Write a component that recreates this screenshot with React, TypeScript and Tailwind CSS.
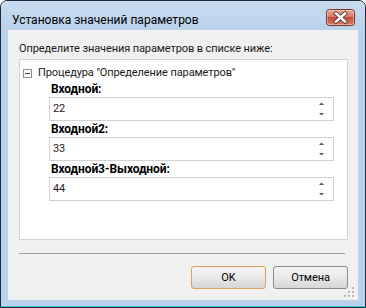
import React from 'react';

function CloseButton() {
  return (
    <svg width="29" height="17" viewBox="0 0 29 17">
      <defs>
        <linearGradient id="closeGrad" x1="0" y1="0" x2="0" y2="1">
          <stop offset="0" stopColor="#eaaa9b" />
          <stop offset="0.45" stopColor="#d67866" />
          <stop offset="0.5" stopColor="#c64a36" />
          <stop offset="1" stopColor="#d9806a" />
        </linearGradient>
      </defs>
      <rect x="0.5" y="0.5" width="28" height="16" rx="3" fill="url(#closeGrad)" stroke="#763529" />
      <rect x="1.5" y="1.5" width="26" height="14" rx="2" fill="none" stroke="#ffffff" strokeOpacity="0.4" />
      <g strokeLinecap="square">
        <path d="M10 4.5 L19 12.5 M19 4.5 L10 12.5" stroke="#5e3a34" strokeWidth="4.2" />
        <path d="M10 4.5 L19 12.5 M19 4.5 L10 12.5" stroke="#ffffff" strokeWidth="2.4" />
      </g>
    </svg>
  );
}

function Spinner() {
  return (
    <svg width="7" height="16" viewBox="0 0 7 16" className="mr-[8px]">
      <path d="M1 4 L6 4 L3.5 1.5 Z" fill="#5a5a5a" />
      <path d="M1 12 L6 12 L3.5 14.5 Z" fill="#5a5a5a" />
    </svg>
  );
}

function Param({ label, value }: { label: string; value: string }) {
  return (
    <div className="flex flex-col">
      <div className="h-[16px] leading-[16px] pl-[2px] text-[12px] font-bold text-black">{label}</div>
      <div className="h-[24px] w-[285px] border border-[#d1d1d1] bg-white flex items-center justify-between pl-[3px]">
        <span className="text-[#1e1e1e]">{value}</span>
        <Spinner />
      </div>
    </div>
  );
}

function Grip() {
  const dots = [
    [8, 0],
    [4, 4],
    [8, 4],
    [0, 8],
    [4, 8],
    [8, 8],
  ];
  return (
    <svg width="11" height="11" viewBox="0 0 11 11" className="absolute right-[3px] bottom-[2px]">
      {dots.map(([x, y], i) => (
        <g key={i}>
          <rect x={x + 1} y={y + 1} width="2" height="2" fill="#ffffff" />
          <rect x={x} y={y} width="2" height="2" fill="#b8b8b8" />
        </g>
      ))}
    </svg>
  );
}

export default function App() {
  return (
    <div className="w-[366px] h-[308px] bg-white font-['Segoe_UI','Roboto',sans-serif] text-[11px] tracking-[-0.1px] text-black">
      <div className="w-full h-full border border-[#1f2b38] rounded-t-[7px] bg-[#b9d1ea] flex flex-col overflow-hidden">
        {/* title bar */}
        <div className="h-[29px] flex justify-between bg-gradient-to-b from-[#c8dcf0] to-[#bad2ea]">
          <div className="pl-[11px] pt-[11px] h-[16px] leading-[16px] text-[12px] tracking-normal text-black">Установка значений параметров</div>
          <div className="mt-[8px] mr-[10px]">
            <CloseButton />
          </div>
        </div>

        {/* client area */}
        <div className="relative h-[270px] mx-[7px] bg-[#f0f0f0] flex flex-col pl-[11px] pr-[10px]">
          <div className="pt-[11px] h-[27px] leading-[16px] text-[#1a1a1a]">Определите значения параметров в списке ниже:</div>

          <div className="mt-[2px] h-[181px] border border-[#d4d4d4] bg-white flex flex-col pt-[5px]">
            <div className="h-[16px] flex items-center pl-[3px]">
              <div className="w-[9px] h-[9px] border border-[#8e8e8e] bg-white flex items-center justify-center">
                <div className="w-[5px] h-px bg-[#404040]" />
              </div>
              <span className="ml-[6px] leading-[16px] text-[#1a1a1a]">Процедура "Определение параметров"</span>
            </div>
            <div className="pl-[29px] flex flex-col">
              <Param label="Входной:" value="22" />
              <Param label="Входной2:" value="33" />
              <Param label="Входной3-Выходной:" value="44" />
            </div>
          </div>

          <div className="mt-[13px] w-[326px] h-px bg-[#a0a0a0]" />

          <div className="mt-[12px] flex justify-end gap-[7px]">
            <button className="w-[75px] h-[23px] rounded-[3px] border border-[#d9a25c] bg-gradient-to-b from-[#f4f4f4] via-[#e9e9e9] to-[#d6d6d6] text-black leading-[20px]">
              OK
            </button>
            <button className="w-[75px] h-[23px] rounded-[3px] border border-[#8a8a8a] bg-gradient-to-b from-[#f4f4f4] via-[#e9e9e9] to-[#d6d6d6] text-black leading-[20px]">
              Отмена
            </button>
          </div>

          <Grip />
        </div>

        <div className="h-[6px]" />
        <div className="h-px bg-[#3fc5d6]" />
      </div>
    </div>
  );
}
